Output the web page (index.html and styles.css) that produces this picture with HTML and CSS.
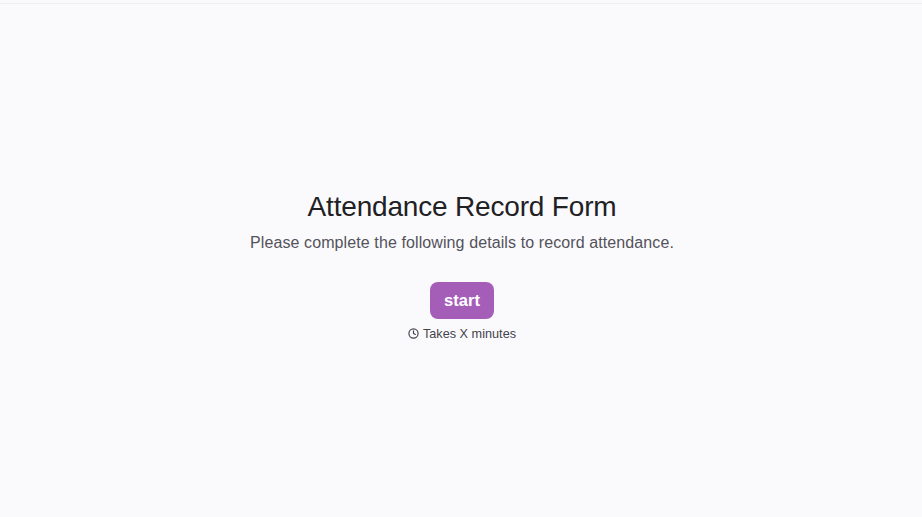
FILE: index.html
```html
<!DOCTYPE html>
<html lang="en">
<head>
<meta charset="utf-8">
<title>Attendance Record Form</title>
<link rel="stylesheet" href="styles.css">
</head>
<body>
<div class="topline"></div>
<main class="welcome">
  <h1 class="title">Attendance Record Form</h1>
  <p class="subtitle">Please complete the following details to record attendance.</p>
  <button class="start" type="button">start</button>
  <p class="time">
    <svg class="clock" viewBox="0 0 24 24" width="11" height="11" aria-hidden="true"><circle cx="12" cy="12" r="10"/><path d="M12 6v6l4 2"/></svg>
    <span>Takes X minutes</span>
  </p>
</main>
</body>
</html>
```
FILE: styles.css
```css
* { box-sizing: border-box; }
html, body { margin: 0; height: 100%; }
body {
  background: #fafafd;
  font-family: "Liberation Sans", Arial, sans-serif;
  display: flex;
  flex-direction: column;
  overflow: hidden;
}
.topline { height: 4px; flex: none; background: #fafafd; border-bottom: 1px solid #f0f0f2; }
.welcome {
  flex: 1;
  display: flex;
  flex-direction: column;
  align-items: center;
  padding: 186px 0 0 2px;
}
.title { margin: 0; font-size: 28px; line-height: 34px; font-weight: 400; letter-spacing: -0.18px; color: #212124; }
.subtitle { margin: 9px 0 0; font-size: 16px; line-height: 20px; letter-spacing: 0.1px; color: #54525a; }
.start {
  margin-top: 29px;
  width: 64px;
  height: 37px;
  border: 0;
  border-radius: 8px;
  background: #a55eb8;
  color: #fff;
  font: 700 16.5px "Liberation Sans", Arial, sans-serif;
  padding: 0;
}
.time {
  margin: 7px 0 0;
  display: flex;
  align-items: center;
  gap: 4px;
  font-size: 12.7px;
  line-height: 16px;
  color: #45434b;
}
.clock { margin-bottom: 1px; fill: none; stroke: currentColor; stroke-width: 2.6; stroke-linecap: round; stroke-linejoin: round; }
```
